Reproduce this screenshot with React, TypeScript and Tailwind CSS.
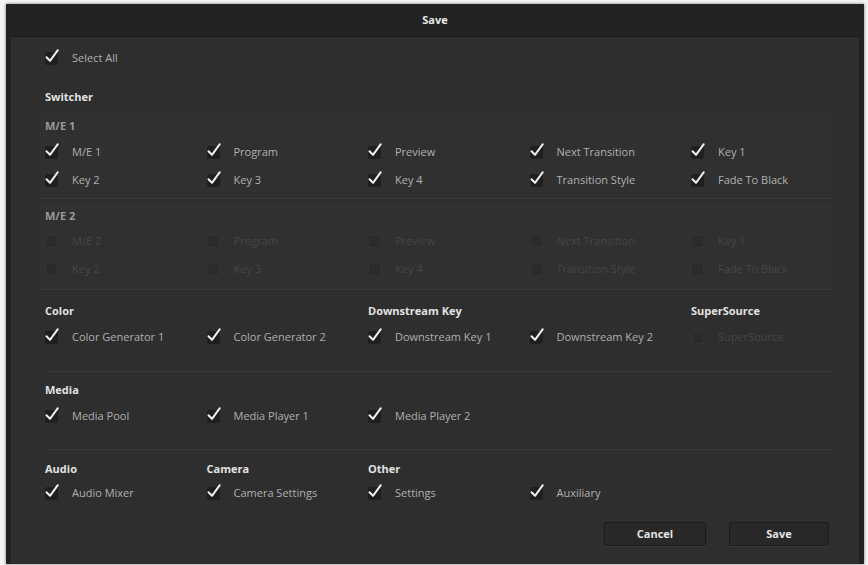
import React from 'react';

type Item = { label: string; checked?: boolean; disabled?: boolean };

const Check: React.FC<{ checked?: boolean; disabled?: boolean }> = ({ checked, disabled }) => (
  <span
    className={`relative inline-block w-[13px] h-[13px] rounded-[2px] shrink-0 ${
      disabled ? 'bg-[#2b2b2b] border border-[#333]' : 'bg-[#1f1f1f]'
    }`}
  >
    {checked && (
      <svg viewBox="0 0 16 16" className="absolute -left-[1px] -top-[4px] w-[16px] h-[16px]">
        <path d="M2.5 9.2 L6 12.8 L13.8 2.2" fill="none" stroke="#f0f0f0" strokeWidth="2" strokeLinecap="round" strokeLinejoin="round" />
      </svg>
    )}
  </span>
);

const Option: React.FC<Item> = ({ label, checked = true, disabled }) => (
  <div className="w-[161.5px] shrink-0 h-[18px] flex items-center gap-[14px]">
    <Check checked={checked && !disabled} disabled={disabled} />
    <span className={`text-[11px] whitespace-nowrap ${disabled ? 'text-[#464646]' : 'text-[#b0b0b0]'}`}>{label}</span>
  </div>
);

const Label: React.FC<{ children: React.ReactNode; dim?: boolean }> = ({ children, dim }) => (
  <div className={`h-[16px] flex items-center text-[11px] font-bold whitespace-nowrap ${dim ? 'text-[#9a9a9a]' : 'text-[#e2e2e2]'}`}>{children}</div>
);

const me1: Item[][] = [
  [{ label: 'M/E 1' }, { label: 'Program' }, { label: 'Preview' }, { label: 'Next Transition' }, { label: 'Key 1' }],
  [{ label: 'Key 2' }, { label: 'Key 3' }, { label: 'Key 4' }, { label: 'Transition Style' }, { label: 'Fade To Black' }],
];

const me2: Item[][] = [
  [{ label: 'M/E 2' }, { label: 'Program' }, { label: 'Preview' }, { label: 'Next Transition' }, { label: 'Key 1' }],
  [{ label: 'Key 2' }, { label: 'Key 3' }, { label: 'Key 4' }, { label: 'Transition Style' }, { label: 'Fade To Black' }],
].map(r => r.map(i => ({ ...i, disabled: true })));

const App: React.FC = () => {
  return (
    <div className="w-[868px] h-[565px] bg-[#f4f4f4] pl-[6px] pt-[4px] pr-[4px]" style={{ fontFamily: '"Open Sans", "Noto Sans", sans-serif' }}>
      <div className="w-[858px] h-[560px] bg-[#2e2e2e] border-x-[5px] border-[#222] flex flex-col shadow-[0_0_3px_rgba(0,0,0,0.5)]">
        {/* Title bar */}
        <div className="h-[33px] shrink-0 bg-[#232323] flex items-center justify-center text-[11px] font-bold text-[#e8e8e8] border-b border-[#1b1b1b]">
          Save
        </div>

        <div className="flex flex-col pl-[34px] pr-[23px]">
          {/* Select All */}
          <div className="mt-[12px]">
            <Option label="Select All" />
          </div>

          {/* Switcher */}
          <div className="mt-[22px]">
            <Label>Switcher</Label>
          </div>

          <div className="mt-[7px] -ml-[6px] mr-[4px] pl-[6px] h-[87px] bg-[#303030] border-b border-[#383838]">
            <div className="mt-[6px]"><Label dim>M/E 1</Label></div>
            <div className="mt-[9px] flex flex-col gap-[10px]">
              {me1.map((row, r) => (
                <div key={r} className="flex">
                  {row.map(i => <Option key={i.label} {...i} />)}
                </div>
              ))}
            </div>
          </div>

          <div className="mt-[4px] -ml-[6px] mr-[4px] pl-[6px] h-[87px] bg-[#303030] border-b border-[#383838]">
            <div className="mt-[5px]"><Label dim>M/E 2</Label></div>
            <div className="mt-[8px] flex flex-col gap-[10px]">
              {me2.map((row, r) => (
                <div key={r} className="flex">
                  {row.map(i => <Option key={i.label} {...i} />)}
                </div>
              ))}
            </div>
          </div>

          {/* Color / Downstream Key / SuperSource */}
          <div className="h-[82px] mr-[4px] pt-[13px] border-b border-[#373737]">
            <div className="flex">
              <div className="w-[323px] shrink-0"><Label>Color</Label></div>
              <div className="w-[323px] shrink-0"><Label>Downstream Key</Label></div>
              <div><Label>SuperSource</Label></div>
            </div>
            <div className="mt-[9px] flex">
              <Option label="Color Generator 1" />
              <Option label="Color Generator 2" />
              <Option label="Downstream Key 1" />
              <Option label="Downstream Key 2" />
              <Option label="SuperSource" disabled />
            </div>
          </div>

          {/* Media */}
          <div className="h-[78px] mr-[4px] pt-[10px] border-b border-[#373737]">
            <Label>Media</Label>
            <div className="mt-[9px] flex">
              <Option label="Media Pool" />
              <Option label="Media Player 1" />
              <Option label="Media Player 2" />
            </div>
          </div>

          {/* Audio / Camera / Other */}
          <div className="pt-[11px]">
            <div className="flex">
              <div className="w-[161.5px] shrink-0"><Label>Audio</Label></div>
              <div className="w-[161.5px] shrink-0"><Label>Camera</Label></div>
              <div><Label>Other</Label></div>
            </div>
            <div className="mt-[7px] flex">
              <Option label="Audio Mixer" />
              <Option label="Camera Settings" />
              <Option label="Settings" />
              <Option label="Auxiliary" />
            </div>
          </div>

          {/* Buttons */}
          <div className="mt-[20px] flex justify-end gap-[23px] pr-[7px]">
            <button className="w-[102px] h-[24px] rounded-[2px] bg-[#282828] border border-[#1c1c1c] shadow-[0_1px_0_#3a3a3a] text-[11px] font-bold text-[#e4e4e4]">
              Cancel
            </button>
            <button className="w-[100px] h-[24px] rounded-[2px] bg-[#282828] border border-[#1c1c1c] shadow-[0_1px_0_#3a3a3a] text-[11px] font-bold text-[#e4e4e4]">
              Save
            </button>
          </div>
        </div>
      </div>
    </div>
  );
};

export default App;
